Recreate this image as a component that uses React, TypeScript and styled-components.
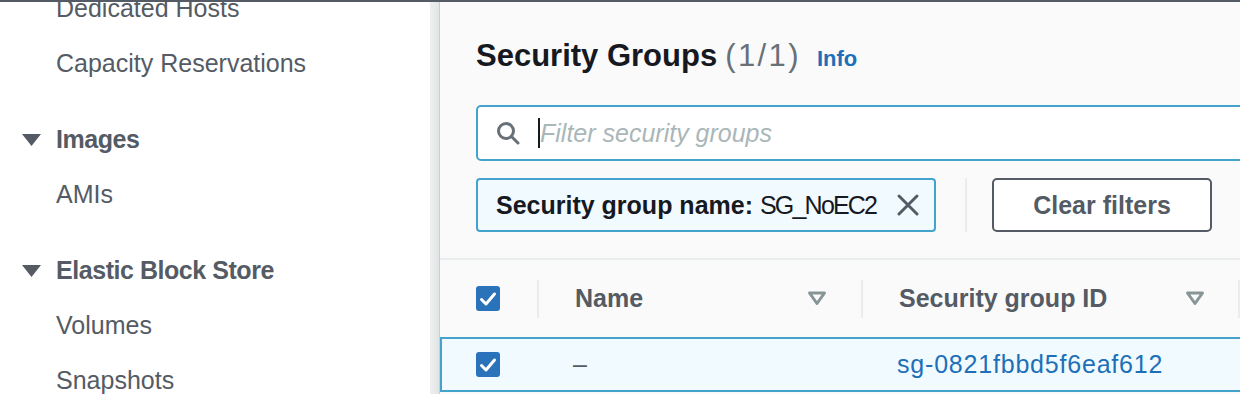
import React from 'react';
import styled, { createGlobalStyle } from 'styled-components';

const GlobalStyle = createGlobalStyle`
  html, body {
    margin: 0;
    padding: 0;
  }

  body {
    width: 1240px;
    height: 394px;
    overflow: hidden;
    background: #ffffff;
    font-family: "Liberation Sans", Arial, sans-serif;
  }
`;

const Page = styled.div`
  display: flex;
  flex-direction: column;
  width: 1240px;
  height: 394px;
  overflow: hidden;
`;

const TopEdge = styled.div`
  height: 2px;
  flex-shrink: 0;
  background: #545b64;
`;

const Body = styled.div`
  display: flex;
  flex: 1;
  min-height: 0;
`;

// left navigation (scrolled, first item partly hidden)
const Sidebar = styled.nav`
  width: 430px;
  flex-shrink: 0;
  background: #ffffff;
  overflow: hidden;
`;

const NavList = styled.ul`
  list-style: none;
  margin: -21px 0 0;
  padding: 0;
`;

const NavItem = styled.li`
  height: 55px;
  line-height: 55px;
  padding-left: 56px;

  font-size: 25px;
  color: #545b64;
  white-space: nowrap;
`;

const NavSection = styled.li`
  display: flex;
  align-items: center;
  gap: 15px;

  height: 55px;
  line-height: 55px;
  margin-top: 21px;
  padding-left: 22px;

  font-size: 25px;
  font-weight: 700;
  letter-spacing: -0.45px;
  color: #545b64;
  white-space: nowrap;
`;

const Gutter = styled.div`
  width: 9px;
  flex-shrink: 0;
  background: linear-gradient(to right, #eef0f0, #e2e5e5);
  border-right: 1px solid #c9cece;
`;

// main panel
const Main = styled.main`
  flex: 1;
  min-width: 0;
  padding-top: 34px;
  background: #fafafa;
  overflow: hidden;
`;

const Header = styled.div`
  display: flex;
  align-items: baseline;
  height: 40px;
  line-height: 40px;
  padding-left: 36px;
  white-space: nowrap;
`;

const Title = styled.h1`
  margin: 0;
  font-size: 31px;
  font-weight: 700;
  color: #16191f;
`;

const Count = styled.span`
  margin-left: 8px;
  font-weight: 400;
  letter-spacing: 2.4px;
  color: #687078;
`;

const InfoLink = styled.a`
  margin-left: 16px;
  font-size: 22px;
  font-weight: 700;
  color: #1d70b8;
  text-decoration: none;
`;

const Filters = styled.div`
  margin-top: 29px;
  padding-left: 36px;
`;

const SearchBox = styled.div`
  display: flex;
  align-items: center;
  box-sizing: border-box;
  width: 820px;
  height: 56px;
  padding-left: 18px;

  background: #ffffff;
  border: 2px solid #44a3cd;
  border-radius: 5px;
`;

const Caret = styled.span`
  width: 2px;
  height: 30px;
  margin-left: 18px;
  background: #16191f;
`;

const Placeholder = styled.span`
  font-size: 25px;
  font-style: italic;
  color: #aab7b8;
  white-space: nowrap;
`;

const TokenRow = styled.div`
  display: flex;
  align-items: center;
  height: 54px;
  margin-top: 17px;
`;

const Token = styled.div`
  display: flex;
  align-items: center;
  box-sizing: border-box;
  width: 460px;
  height: 54px;
  padding: 0 14px 0 18px;
  flex-shrink: 0;

  background: #f1faff;
  border: 2px solid #44a3cd;
  border-radius: 4px;

  font-size: 25px;
  color: #16191f;
  white-space: nowrap;
`;

const TokenKey = styled.b`
  font-weight: 700;
`;

const TokenValue = styled.span`
  margin-left: 7px;
  letter-spacing: -1.8px;
`;

const Dismiss = styled.svg`
  margin-left: auto;
`;

const VRule = styled.div<{ $h: number; $gap?: number }>`
  width: 2px;
  height: ${p => p.$h}px;
  flex-shrink: 0;
  margin-left: ${p => p.$gap ?? 0}px;
  background: #eaeded;
`;

const ClearButton = styled.button`
  box-sizing: border-box;
  width: 220px;
  height: 54px;
  margin-left: 25px;
  flex-shrink: 0;

  background: #ffffff;
  border: 2px solid #545b64;
  border-radius: 5px;

  font-family: inherit;
  font-size: 25px;
  font-weight: 700;
  color: #545b64;
`;

// table
const Table = styled.div`
  margin-top: 26px;
  border-top: 2px solid #eaeded;
`;

const HeadRow = styled.div`
  display: flex;
  align-items: center;
  height: 77px;
`;

const HeadCell = styled.div<{ $w: number; $pr?: number }>`
  display: flex;
  align-items: center;
  justify-content: space-between;
  box-sizing: border-box;
  width: ${p => p.$w}px;
  flex-shrink: 0;
  padding: 0 ${p => p.$pr ?? 0}px 0 36px;

  font-size: 25px;
  font-weight: 700;
  color: #545b64;
  white-space: nowrap;
`;

const DataRow = styled.div`
  display: flex;
  align-items: center;
  box-sizing: border-box;
  width: 900px;
  height: 55px;

  background: #f1faff;
  border: 2px solid #44a3cd;
`;

const DataCell = styled.div<{ $w: number }>`
  display: flex;
  align-items: center;
  box-sizing: border-box;
  width: ${p => p.$w}px;
  flex-shrink: 0;
  padding-left: 34px;

  font-size: 25px;
  color: #545b64;
  white-space: nowrap;
`;

const IdLink = styled.a`
  color: #1d70b8;
  letter-spacing: 0.8px;
  text-decoration: none;
`;

const Box = styled.span`
  display: inline-flex;
  align-items: center;
  justify-content: center;
  width: 24px;
  height: 25px;
  border-radius: 3px;
  background: #2a72b9;
`;

const Checkbox = () => (
  <Box>
    <svg width="18" height="16" viewBox="0 0 18 16">
      <polyline points="2.5,8.5 7,13 15.5,3" fill="none" stroke="#ffffff" strokeWidth="3" strokeLinecap="round" strokeLinejoin="round" />
    </svg>
  </Box>
);

const SortIcon = () => (
  <svg width="20" height="15" viewBox="0 0 20 15">
    <polygon points="2.5,2 17.5,2 10,12.5" fill="none" stroke="#879596" strokeWidth="3" strokeLinejoin="round" />
  </svg>
);

const SectionCaret = () => (
  <svg width="19" height="12" viewBox="0 0 19 12">
    <polygon points="0,0 19,0 9.5,12" fill="#545b64" />
  </svg>
);

const SearchIcon = () => (
  <svg width="24" height="24" viewBox="0 0 24 24">
    <circle cx="10" cy="10" r="7.5" fill="none" stroke="#687078" strokeWidth="3" />
    <line x1="15.5" y1="15.5" x2="22" y2="22" stroke="#687078" strokeWidth="3" strokeLinecap="round" />
  </svg>
);

const App: React.FC = () => {
  return (
    <>
      <GlobalStyle />
      <Page>
        <TopEdge />
        <Body>
          <Sidebar>
            <NavList>
              <NavItem>Dedicated Hosts</NavItem>
              <NavItem>Capacity Reservations</NavItem>
              <NavSection><SectionCaret />Images</NavSection>
              <NavItem>AMIs</NavItem>
              <NavSection><SectionCaret />Elastic Block Store</NavSection>
              <NavItem>Volumes</NavItem>
              <NavItem>Snapshots</NavItem>
            </NavList>
          </Sidebar>
          <Gutter />
          <Main>
            <Header>
              <Title>Security Groups<Count>(1/1)</Count></Title>
              <InfoLink>Info</InfoLink>
            </Header>

            <Filters>
              <SearchBox>
                <SearchIcon />
                <Caret />
                <Placeholder>Filter security groups</Placeholder>
              </SearchBox>
              <TokenRow>
                <Token>
                  <TokenKey>Security group name:</TokenKey>
                  <TokenValue>SG_NoEC2</TokenValue>
                  <Dismiss width="24" height="24" viewBox="0 0 24 24">
                    <path d="M3 3 L21 21 M21 3 L3 21" stroke="#545b64" strokeWidth="3" strokeLinecap="round" />
                  </Dismiss>
                </Token>
                <VRule $h={54} $gap={29} />
                <ClearButton type="button">Clear filters</ClearButton>
              </TokenRow>
            </Filters>

            <Table>
              <HeadRow>
                <HeadCell $w={97}><Checkbox /></HeadCell>
                <VRule $h={38} />
                <HeadCell $w={322} $pr={34}>Name<SortIcon /></HeadCell>
                <VRule $h={38} />
                <HeadCell $w={375} $pr={33}>Security group ID<SortIcon /></HeadCell>
                <VRule $h={38} />
              </HeadRow>
              <DataRow>
                <DataCell $w={97}><Checkbox /></DataCell>
                <DataCell $w={324}>–</DataCell>
                <DataCell $w={377}><IdLink>sg-0821fbbd5f6eaf612</IdLink></DataCell>
              </DataRow>
            </Table>
          </Main>
        </Body>
      </Page>
    </>
  );
};

export default App;
